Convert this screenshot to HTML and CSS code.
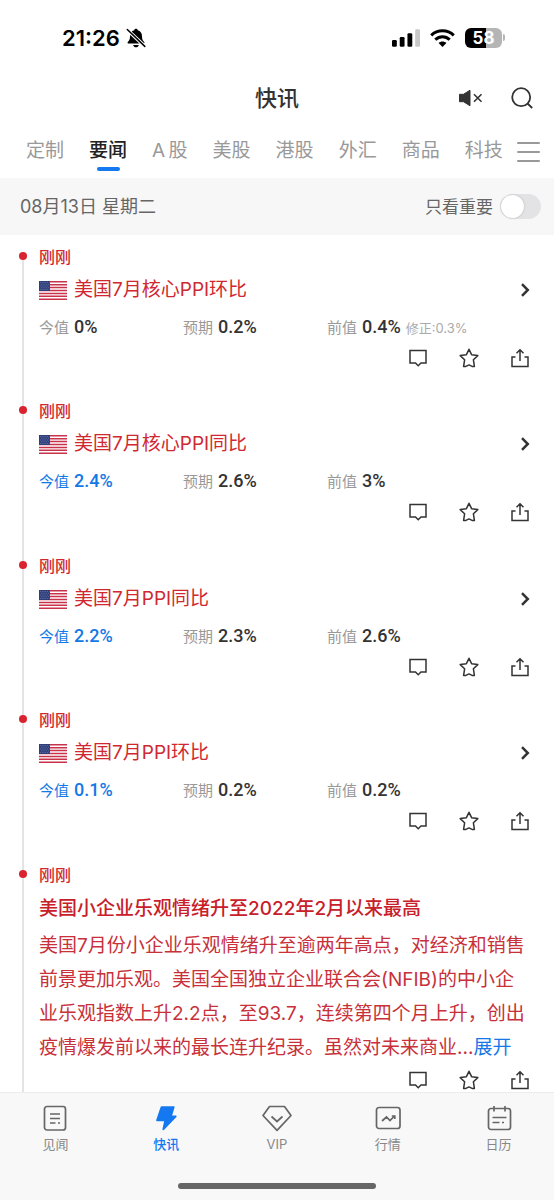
FILE: index.html
```html
<!DOCTYPE html>
<html lang="zh-CN">
<head>
<meta charset="utf-8">
<meta name="viewport" content="width=device-width, initial-scale=1">
<title>快讯</title>
<link rel="stylesheet" href="styles.css">
</head>
<body>
<svg class="sprite" aria-hidden="true">
  <symbol id="flag" viewBox="0 0 28 19">
    <path fill="#fff" d="M0 0h28v19H0z"/>
    <path stroke="#c8324a" stroke-width="1.5" d="M0 .75h28M0 3.67h28M0 6.6h28M0 9.5h28M0 12.4h28M0 15.3h28M0 18.25h28"/>
    <path fill="#2f3f7c" d="M0 0h11v10H0z"/>
    <path stroke="#8791b8" stroke-width=".7" stroke-dasharray=".7 1.1" d="M1 1.5h9.500M1.900 3.200h9M1 5h9.500M1.900 6.800h9M1 8.500h9.500"/>
  </symbol>
  <symbol id="comment" viewBox="0 0 20 20"><path d="M2 2.500h16v12.500h-5L10.200 17.700l-2.700-2.700H2z"/></symbol>
  <symbol id="star" viewBox="0 0 20 20"><path stroke-linejoin="round" d="M10 1.300l2.600 5.400 6.200.9-4.400 4.200 1 6.600h-2.300L10 16.900l-3.100 1.500H4.600l1-6.600L1.200 7.600l6.200-.9z"/></symbol>
  <symbol id="share" viewBox="0 0 20 20"><path d="M5.500 9H2v9.400h16V9h-3.500M10 13V2M6.500 5.200L10 1.700l3.500 3.500"/></symbol>
  <symbol id="chevron" viewBox="0 0 10 14"><path d="M2 1.200L7.800 7 2 12.800"/></symbol>
</svg>

<header class="top">
  <div class="status">
    <div class="status-left">
      <span class="clock">21:26</span>
      <svg class="bell" viewBox="0 0 20 20"><path fill="#000" d="M10 .8c1 0 1.700.7 1.800 1.500 2.700.8 4.200 3 4.200 5.900 0 3.500 1 4.300 2.200 5.700.5.700.2 1.700-.8 1.700H2.600c-1 0-1.300-1-.8-1.700C3 12.500 4 11.700 4 8.200c0-2.900 1.500-5.100 4.200-5.900C8.300 1.500 9 .8 10 .8zM7.200 17h5.600c-.3 1.500-1.400 2.300-2.800 2.300S7.500 18.500 7.200 17z"/><path stroke="#fff" stroke-width="3.400" d="M1 1.500L19 18.500"/><path stroke="#000" stroke-width="1.500" stroke-linecap="round" d="M1.300 1.500L18.800 18.400"/></svg>
    </div>
    <div class="status-right">
      <svg class="signal" viewBox="0 0 29 18"><rect y="11" width="5" height="7" rx="1.300"/><rect x="8" y="8" width="5" height="10" rx="1.300"/><rect x="16" y="4" width="5" height="14" rx="1.300"/><rect x="24" width="5" height="18" rx="1.300" fill="#c8c8c8"/></svg>
      <svg class="wifi" viewBox="0 0 25 18"><g fill="none" stroke="#000" stroke-width="3"><path d="M1.200 6.300c6.300-6 16.300-6 22.600 0"/><path d="M5.300 10.600c4.100-3.900 10.300-3.900 14.400 0"/></g><path d="M12.500 18l-3.900-4c2.200-2 5.600-2 7.800 0z"/></svg>
      <span class="battery"><span class="battery-level">58</span></span>
    </div>
  </div>
  <div class="titlebar">
    <h1>快讯</h1>
    <div class="tools">
      <button class="icon-btn" aria-label="静音"><svg class="mute" viewBox="0 0 26 18"><path fill="#333" stroke="#333" stroke-linejoin="round" d="M1.500 5.300h4L12 1.200v15.600l-6.500-4.100h-4z"/><path stroke="#333" stroke-width="1.600" d="M16 5.300l7.500 7.500M23.500 5.300L16 12.800"/></svg></button>
      <button class="icon-btn" aria-label="搜索"><svg class="search" viewBox="0 0 22 22"><g fill="none" stroke="#333" stroke-width="1.800"><circle cx="10.200" cy="10.200" r="9"/><path d="M16.500 16.500l4.700 4.500"/></g></svg></button>
    </div>
  </div>
  <div class="channels">
    <nav class="tabs">
      <a href="#">定制</a><a href="#" class="active" aria-current="page">要闻</a><a href="#">A&thinsp;股</a><a href="#">美股</a><a href="#">港股</a><a href="#">外汇</a><a href="#">商品</a><a href="#">科技</a>
    </nav>
    <button class="icon-btn menu" aria-label="全部频道"><span></span><span></span><span></span></button>
  </div>
  <div class="datebar">
    <span class="date">08月13日 星期二</span>
    <label class="only"><span>只看重要</span><input type="checkbox" class="switch"></label>
  </div>
</header>

<main class="feed">
  <ol class="timeline">
    <li class="item">
      <div class="rail"><i class="dot"></i></div>
      <article>
        <time>刚刚</time>
        <a class="indicator" href="#"><svg class="flag"><use href="#flag"/></svg><span>美国7月核心PPI环比</span><svg class="chevron"><use href="#chevron"/></svg></a>
        <dl class="values">
          <div><dt>今值</dt><dd>0%</dd></div><div><dt>预期</dt><dd>0.2%</dd></div><div><dt>前值</dt><dd>0.4%</dd><dd class="revised">修正:0.3%</dd></div>
        </dl>
        <div class="actions"><button class="icon-btn" aria-label="评论"><svg><use href="#comment"/></svg></button><button class="icon-btn" aria-label="收藏"><svg><use href="#star"/></svg></button><button class="icon-btn" aria-label="分享"><svg><use href="#share"/></svg></button></div>
      </article>
    </li>
    <li class="item">
      <div class="rail"><i class="dot"></i></div>
      <article>
        <time>刚刚</time>
        <a class="indicator" href="#"><svg class="flag"><use href="#flag"/></svg><span>美国7月核心PPI同比</span><svg class="chevron"><use href="#chevron"/></svg></a>
        <dl class="values">
          <div class="low"><dt>今值</dt><dd>2.4%</dd></div><div><dt>预期</dt><dd>2.6%</dd></div><div><dt>前值</dt><dd>3%</dd></div>
        </dl>
        <div class="actions"><button class="icon-btn" aria-label="评论"><svg><use href="#comment"/></svg></button><button class="icon-btn" aria-label="收藏"><svg><use href="#star"/></svg></button><button class="icon-btn" aria-label="分享"><svg><use href="#share"/></svg></button></div>
      </article>
    </li>
    <li class="item">
      <div class="rail"><i class="dot"></i></div>
      <article>
        <time>刚刚</time>
        <a class="indicator" href="#"><svg class="flag"><use href="#flag"/></svg><span>美国7月PPI同比</span><svg class="chevron"><use href="#chevron"/></svg></a>
        <dl class="values">
          <div class="low"><dt>今值</dt><dd>2.2%</dd></div><div><dt>预期</dt><dd>2.3%</dd></div><div><dt>前值</dt><dd>2.6%</dd></div>
        </dl>
        <div class="actions"><button class="icon-btn" aria-label="评论"><svg><use href="#comment"/></svg></button><button class="icon-btn" aria-label="收藏"><svg><use href="#star"/></svg></button><button class="icon-btn" aria-label="分享"><svg><use href="#share"/></svg></button></div>
      </article>
    </li>
    <li class="item">
      <div class="rail"><i class="dot"></i></div>
      <article>
        <time>刚刚</time>
        <a class="indicator" href="#"><svg class="flag"><use href="#flag"/></svg><span>美国7月PPI环比</span><svg class="chevron"><use href="#chevron"/></svg></a>
        <dl class="values">
          <div class="low"><dt>今值</dt><dd>0.1%</dd></div><div><dt>预期</dt><dd>0.2%</dd></div><div><dt>前值</dt><dd>0.2%</dd></div>
        </dl>
        <div class="actions"><button class="icon-btn" aria-label="评论"><svg><use href="#comment"/></svg></button><button class="icon-btn" aria-label="收藏"><svg><use href="#star"/></svg></button><button class="icon-btn" aria-label="分享"><svg><use href="#share"/></svg></button></div>
      </article>
    </li>
    <li class="item">
      <div class="rail"><i class="dot"></i></div>
      <article>
        <time>刚刚</time>
        <h2>美国小企业乐观情绪升至2022年2月以来最高</h2>
        <p>美国7月份小企业乐观情绪升至逾两年高点，对经济和销售前景更加乐观。美国全国独立企业联合会(NFIB)的中小企业乐观指数上升2.2点，至93.7，连续第四个月上升，创出疫情爆发前以来的最长连升纪录。虽然对未来商业...<a href="#">展开</a></p>
        <div class="actions"><button class="icon-btn" aria-label="评论"><svg><use href="#comment"/></svg></button><button class="icon-btn" aria-label="收藏"><svg><use href="#star"/></svg></button><button class="icon-btn" aria-label="分享"><svg><use href="#share"/></svg></button></div>
      </article>
    </li>
  </ol>
</main>

<footer class="bottom">
  <nav class="bottom-nav">
    <a href="#"><svg viewBox="0 0 30 28"><rect x="4.500" y="2.500" width="21" height="23.500" rx="2.500"/><path d="M10 10h10M10 14.500h10M10 19h5.500M18 19h2"/></svg><span>见闻</span></a>
    <a href="#" class="active"><svg viewBox="0 0 30 28"><path class="bolt" d="M10.500 3h12.300L20 12.300h4.800L12.300 25.300l1.900-9H6z"/></svg><span>快讯</span></a>
    <a href="#"><svg viewBox="0 0 30 28"><path stroke-linejoin="round" d="M7.500 2.500h15l6.500 9L15 26.300 1 11.500z"/><path d="M9.500 12.500l5.500 5 5.500-5"/></svg><span>VIP</span></a>
    <a href="#"><svg viewBox="0 0 30 28"><rect x="3.500" y="3.500" width="23.500" height="21" rx="2.500"/><path d="M9 17l4.500-4 3.500 3.500 4.500-4.500M18.800 12h3v3"/></svg><span>行情</span></a>
    <a href="#"><svg viewBox="0 0 30 28"><rect x="4.500" y="4.500" width="22" height="21" rx="2.500"/><path d="M10 2v5.500M21 2v5.500M8.500 13.500h14M8.500 18.500h7M18 18.500h2"/></svg><span>日历</span></a>
  </nav>
  <div class="home"></div>
</footer>
</body>
</html>
```
FILE: styles.css
```css
* { box-sizing: border-box; }
body {
  margin: 0;
  height: 100vh;
  display: flex;
  flex-direction: column;
  background: #fff;
  color: #333;
  font-family: Inter, "Noto Sans CJK SC", sans-serif;
}
h1, h2, p, ol, dl, dd { margin: 0; padding: 0; }
ol { list-style: none; }
a { color: inherit; text-decoration: none; }
svg { display: block; }
.sprite { position: absolute; width: 0; height: 0; }
.icon-btn { display: block; padding: 0; border: 0; background: none; }

.top, .bottom { flex: none; }
.status {
  height: 76px;
  padding: 0 52px 0 62px;
  display: flex;
  align-items: center;
  justify-content: space-between;
}
.status-left, .status-right { display: flex; align-items: center; }
.status-left { gap: 6px; }
.status-right { gap: 10px; }
.clock { font-size: 22px; line-height: 28px; font-weight: 600; color: #000; }
.bell { width: 20px; height: 20px; }
.signal { width: 28px; height: 18px; }
.wifi { width: 25px; height: 18px; }
.battery {
  position: relative;
  width: 37px;
  height: 20px;
  border-radius: 6px;
  background: linear-gradient(90deg, #000 58%, #b5b5b5 58%);
}
.battery::after {
  content: "";
  position: absolute;
  left: 100%;
  top: 6px;
  width: 2px;
  height: 7px;
  margin-left: 1px;
  border-radius: 0 2px 2px 0;
  background: #b5b5b5;
}
.battery-level {
  display: block;
  text-align: center;
  font-size: 17px;
  line-height: 20px;
  font-weight: 700;
  color: #fff;
}

.titlebar {
  height: 44px;
  padding: 0 21px;
  display: grid;
  grid-template-columns: 1fr auto 1fr;
  align-items: center;
}
.titlebar h1 { grid-column: 2; font-size: 22px; line-height: 30px; font-weight: 500; }
.tools { display: flex; justify-content: flex-end; align-items: center; gap: 27px; }
.mute { width: 26px; height: 18px; }
.search { width: 22px; height: 22px; }

.channels {
  height: 58px;
  padding: 0 14px 0 26px;
  display: flex;
  align-items: center;
  justify-content: space-between;
  color: #999;
}
.tabs { display: flex; gap: 25px; font-size: 19px; line-height: 28px; white-space: nowrap; }
.tabs a { display: flex; flex-direction: column; align-items: center; padding-top: 10px; }
.tabs a::after {
  content: "";
  width: 23px;
  height: 4px;
  margin-top: 2px;
  border-radius: 2px;
}
.tabs .active { color: #222; font-weight: 500; }
.tabs .active::after { background: #1478f0; }
.menu { display: grid; gap: 7px; padding-top: 6px; }
.menu span { width: 23px; height: 2px; border-radius: 1px; background: #999; }

.datebar {
  height: 57px;
  padding: 0 13px 0 20px;
  display: flex;
  align-items: center;
  justify-content: space-between;
  background: #f7f7f7;
  color: #666;
  font-size: 17px;
  line-height: 24px;
}
.date { font-size: 18px; }
.only { display: flex; align-items: center; gap: 7px; }
.switch {
  appearance: none;
  width: 41px;
  height: 25px;
  margin: 0;
  padding: 1px;
  border-radius: 13px;
  background: #e3e3e5;
}
.switch::before {
  content: "";
  display: block;
  width: 23px;
  height: 23px;
  border-radius: 50%;
  background: #fff;
  box-shadow: 0 0 2px #aaa;
}
.switch:checked { background: #1478f0; }
.switch:checked::before { margin-left: auto; }

.feed { flex: 1; min-height: 0; overflow-y: auto; scrollbar-width: none; padding-top: 12px; }
.item { display: grid; grid-template-columns: 8px 1fr; gap: 12px; padding: 0 24px 0 19px; }
.rail { display: flex; flex-direction: column; align-items: center; }
.rail::before, .rail::after { content: ""; width: 2px; background: #e4e4e4; }
.rail::before { height: 5px; }
.rail::after { flex: 1; }
.item:first-child .rail::before { background: none; }
.dot { width: 8px; height: 8px; border-radius: 50%; background: #d9232e; }
article { min-width: 0; padding-bottom: 33px; }
time { display: block; color: #d02830; font-size: 16px; line-height: 20px; font-weight: 500; }
.indicator {
  display: flex;
  align-items: center;
  margin-top: 10px;
  color: #d02830;
  font-size: 19px;
  line-height: 26px;
}
.flag { width: 28px; height: 19px; margin-right: 7px; }
.chevron { width: 10px; height: 14px; margin-left: auto; fill: none; stroke: #333; stroke-width: 2.5px; }
.values { display: grid; grid-template-columns: 144px 144px 1fr; height: 22px; margin-top: 13px; line-height: 22px; }
.values div { display: flex; align-items: baseline; gap: 5px; white-space: nowrap; }
.values dt { color: #999; font-size: 15px; }
.values dd { color: #333; font-family: Roboto, sans-serif; font-size: 18px; font-weight: 500; }
.values .low dt, .values .low dd { color: #1478e6; }
.values .revised { color: #aaa; font-family: Inter, "Noto Sans CJK SC", sans-serif; font-size: 13px; font-weight: 400; }
.actions { display: flex; justify-content: flex-end; gap: 31px; margin-top: 10px; }
.actions svg { width: 20px; height: 20px; fill: none; stroke: #333; stroke-width: 1.5px; }
.item:nth-child(even) article { padding-bottom: 34px; }
h2 { margin-top: 11px; color: #c8202a; font-size: 19px; line-height: 26px; font-weight: 500; }
p { margin-top: 7px; color: #c8303a; font-size: 19px; line-height: 34px; }
p a { color: #1478e6; }
p + .actions { margin-top: 5px; }

.bottom { padding-bottom: 11px; border-top: 1px solid #ececec; background: #f8f8f8; }
.bottom-nav { display: grid; grid-template-columns: repeat(5, 1fr); padding-top: 11px; }
.bottom-nav a {
  display: flex;
  flex-direction: column;
  align-items: center;
  gap: 3px;
  color: #888;
  font-size: 13px;
  line-height: 18px;
}
.bottom-nav svg { width: 30px; height: 28px; fill: none; stroke: #666; stroke-width: 1.7px; }
.bottom-nav .bolt { fill: #1478f0; stroke: #1478f0; stroke-linejoin: round; }
.bottom-nav .active { color: #1478f0; font-weight: 500; }
.home { width: 198px; height: 6px; margin: 30px auto 0; border-radius: 3px; background: #666; }
```
